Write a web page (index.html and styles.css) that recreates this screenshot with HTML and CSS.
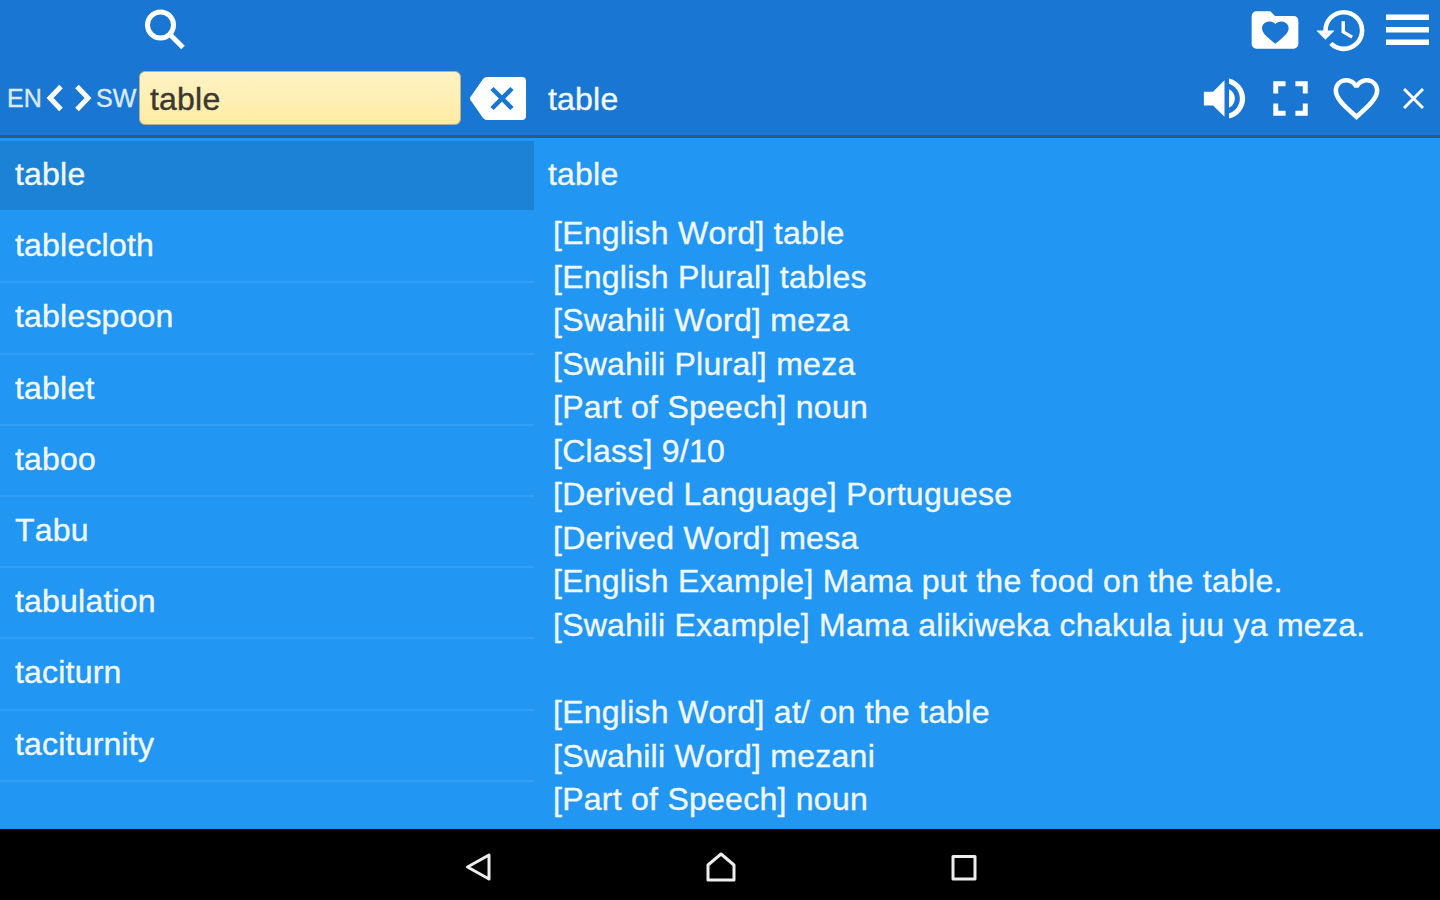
FILE: index.html
```html
<!DOCTYPE html>
<html lang="en">
<head>
  <meta charset="UTF-8" />
  <meta name="viewport" content="width=device-width, initial-scale=1.0" />
  <title>English Swahili Dictionary</title>
  <link rel="stylesheet" href="styles.css">
</head>
<body>
  <header class="header">
    <div class="bar actions">
      <svg class="line search" viewBox="0 0 42 42"><circle cx="16.500" cy="16" r="13"/><path d="M25.500 25 39 38.500"/></svg>
      <svg class="icon folder" viewBox="0 0 24 24"><path d="M10 4H4a2 2 0 0 0-2 2v12c0 1.100.9 2 2 2h16a2 2 0 0 0 2-2V8a2 2 0 0 0-2-2h-8z"/><path class="cut" transform="translate(5.3 6.8) scale(.57 .52)" d="M12 21.350l-1.450-1.320C5.400 15.360 2 12.280 2 8.500 2 5.420 4.420 3 7.500 3c1.740 0 3.410.81 4.500 2.090C13.090 3.810 14.760 3 16.500 3 19.580 3 22 5.420 22 8.500c0 3.780-3.400 6.860-8.550 11.540z"/></svg>
      <svg class="icon history" viewBox="0 0 24 24"><path d="M13 3a9 9 0 0 0-9 9H1l3.890 3.890.07.14L9 12H6c0-3.870 3.130-7 7-7s7 3.130 7 7-3.130 7-7 7c-1.930 0-3.680-.79-4.940-2.060l-1.420 1.420A8.950 8.950 0 0 0 13 21a9 9 0 0 0 0-18zm-1 5v5l4.280 2.540.72-1.210-3.500-2.080V8z"/></svg>
      <svg class="icon menu" viewBox="0 0 43 32"><path d="M0 .5h43v5.500H0zM0 13h43v5.500H0zM0 25.500h43V31H0z"/></svg>
    </div>
    <div class="bar lookup">
      <div class="search-pane">
        <span class="lang from">EN</span>
        <svg class="line swap" viewBox="0 0 46 28"><path d="M15 2.500 4 14l11 11.500M31 2.500 42 14 31 25.500"/></svg>
        <span class="lang">SW</span>
        <input class="query" type="text" value="table" />
        <svg class="icon clear" viewBox="0 0 56 43"><path d="M17 0h35a4 4 0 0 1 4 4v35a4 4 0 0 1-4 4H17a5 5 0 0 1-4-2L.8 23.500a3 3 0 0 1 0-4L13 2a5 5 0 0 1 4-2z"/><path class="cross" d="M22 11.500l20 20M42 11.500l-20 20"/></svg>
      </div>
      <div class="word-pane">
        <span class="word">table</span>
        <svg class="icon volume" viewBox="0 0 24 24"><path d="M3 9v6h4l5 5V4L7 9H3zm13.500 3c0-1.770-1.020-3.290-2.500-4.030v8.050c1.480-.73 2.500-2.250 2.500-4.020zM14 3.230v2.300c2.600.86 4.700 3.300 4.700 6.470s-2.100 5.610-4.700 6.470v2.300c4.010-.91 7-4.490 7-8.770s-2.990-7.860-7-8.770z"/></svg>
        <svg class="icon fullscreen" viewBox="0 0 24 24"><path d="M7 14H5v5h5v-2H7zM5 10h2V7h3V5H5zm12 7h-3v2h5v-5h-2zM14 5v2h3v3h2V5z"/></svg>
        <svg class="icon heart" viewBox="0 0 24 24"><path d="M16.500 3c-1.740 0-3.410.81-4.500 2.090C10.910 3.810 9.240 3 7.500 3 4.420 3 2 5.420 2 8.500c0 3.780 3.400 6.860 8.550 11.540L12 21.350l1.450-1.320C18.600 15.360 22 12.280 22 8.500 22 5.420 19.580 3 16.500 3zm-4.400 15.550l-.1.1-.1-.1C7.140 14.240 4 11.390 4 8.500 4 6.500 5.500 5 7.500 5c1.540 0 3.040.99 3.570 2.360h1.870C13.460 5.990 14.960 5 16.500 5c2 0 3.500 1.500 3.500 3.500 0 2.890-3.140 5.740-7.900 10.050z"/></svg>
        <svg class="line close" viewBox="0 0 21 21"><path d="M1 1l19 19M20 1 1 20"/></svg>
      </div>
    </div>
  </header>

  <main class="content">
    <ul class="words">
      <li class="selected">table</li>
      <li>tablecloth</li>
      <li>tablespoon</li>
      <li>tablet</li>
      <li>taboo</li>
      <li>Tabu</li>
      <li>tabulation</li>
      <li>taciturn</li>
      <li>taciturnity</li>
    </ul>
    <article class="entry">
      <h1>table</h1>
      <p>
        [English Word] table<br/>
        [English Plural] tables<br/>
        [Swahili Word] meza<br/>
        [Swahili Plural] meza<br/>
        [Part of Speech] noun<br/>
        [Class] 9/10<br/>
        [Derived Language] Portuguese<br/>
        [Derived Word] mesa<br/>
        [English Example] Mama put the food on the table.<br/>
        [Swahili Example] Mama alikiweka chakula juu ya meza.
      </p>
      <p>
        [English Word] at/ on the table<br/>
        [Swahili Word] mezani<br/>
        [Part of Speech] noun
      </p>
    </article>
  </main>

  <nav class="navbar">
    <svg class="line" viewBox="0 0 30 30"><path d="M26 3v24L4.500 15z"/></svg>
    <svg class="line" viewBox="0 0 30 30"><path d="M2 28V13L15 2l13 11v15z"/></svg>
    <svg class="line" viewBox="0 0 30 30"><path d="M4 4.500h22V27H4z"/></svg>
  </nav>
</body>
</html>
```

FILE: styles.css
```css
* {
  box-sizing: border-box;
}
body {
  margin: 0;
  height: 100vh;
  display: flex;
  flex-direction: column;
  overflow: hidden;
  background: #2196f3;
  color: #f0f7ff;
  font-family: "Liberation Sans", Arial, sans-serif;
  font-size: 32px;
  font-kerning: none;
  letter-spacing: 0.2px;
  -webkit-text-stroke: 0.4px;
}
svg {
  flex: none;
  display: block;
}
.icon {
  fill: #fff;
}
.line {
  fill: none;
  stroke: #fff;
  stroke-width: 3;
  stroke-linejoin: round;
}

/* header */
.header {
  height: 138px;
  flex: none;
  background: #1976d2;
  border-bottom: 3px solid #35597a;
}
.bar {
  display: flex;
  align-items: center;
}
.actions {
  height: 60px;
  padding: 0 11px 0 144px;
}
.lookup {
  height: 76px;
}
.search {
  width: 42px;
  height: 42px;
  stroke-width: 5;
}
.folder {
  width: 56px;
  height: 56px;
  margin-left: auto;
}
.cut {
  fill: #1976d2;
}
.history {
  width: 55px;
  height: 55px;
  margin: 0 17px 0 11px;
}
.menu {
  width: 43px;
  height: 32px;
}
.search-pane {
  width: 534px;
  padding-left: 7px;
  display: flex;
  align-items: center;
}
.lang {
  width: 43px;
  font-size: 25px;
  color: #d9eafc;
}
.from {
  width: 39px;
}
.swap {
  width: 46px;
  height: 28px;
  margin-right: 4px;
  stroke-width: 5;
  stroke-linejoin: miter;
}
.query {
  width: 322px;
  height: 54px;
  padding: 2px 10px 0;
  border: 1px solid #b9b08a;
  border-radius: 6px;
  background: linear-gradient(#fff3c4, #ffeba4);
  color: #3a3830;
  font: inherit;
  letter-spacing: inherit;
  outline: none;
}
.clear {
  width: 56px;
  height: 43px;
  margin-left: 9px;
}
.cross {
  stroke: #1976d2;
  stroke-width: 4.5;
}
.word-pane {
  flex: 1;
  padding: 0 16px 0 14px;
  display: flex;
  align-items: center;
}
.word {
  padding-top: 2px;
}
.volume {
  width: 55px;
  height: 55px;
  margin-left: auto;
}
.fullscreen {
  width: 59px;
  height: 59px;
  margin: 0 9px;
}
.heart {
  width: 55px;
  height: 55px;
  margin-right: 19px;
}
.close {
  width: 21px;
  height: 21px;
}

/* word list and entry */
.content {
  flex: 1;
  min-height: 0;
  display: flex;
}
.words {
  width: 534px;
  margin: 0;
  padding: 3px 0 0;
  list-style: none;
}
.words li {
  height: 71.2px;
  padding-left: 15px;
  line-height: 67px;
  border-bottom: 2px solid #329ff5;
}
.words .selected {
  background: #1c82d6;
  background-clip: padding-box;
  border-color: transparent;
}
.entry {
  flex: 1;
  padding-left: 14px;
}
.entry h1 {
  margin: 0;
  font-size: 32px;
  font-weight: normal;
  line-height: 73px;
}
.entry p {
  margin: 1px 0 43.5px;
  padding-left: 5px;
  line-height: 43.54px;
  letter-spacing: 0.26px;
  white-space: nowrap;
}

/* system buttons */
.navbar {
  height: 71px;
  flex: none;
  display: flex;
  justify-content: center;
  align-items: center;
  gap: 213px;
  padding: 4px 0 0 2px;
  background: #000;
}
.navbar svg {
  width: 30px;
  height: 30px;
  stroke: #eee;
}
```
